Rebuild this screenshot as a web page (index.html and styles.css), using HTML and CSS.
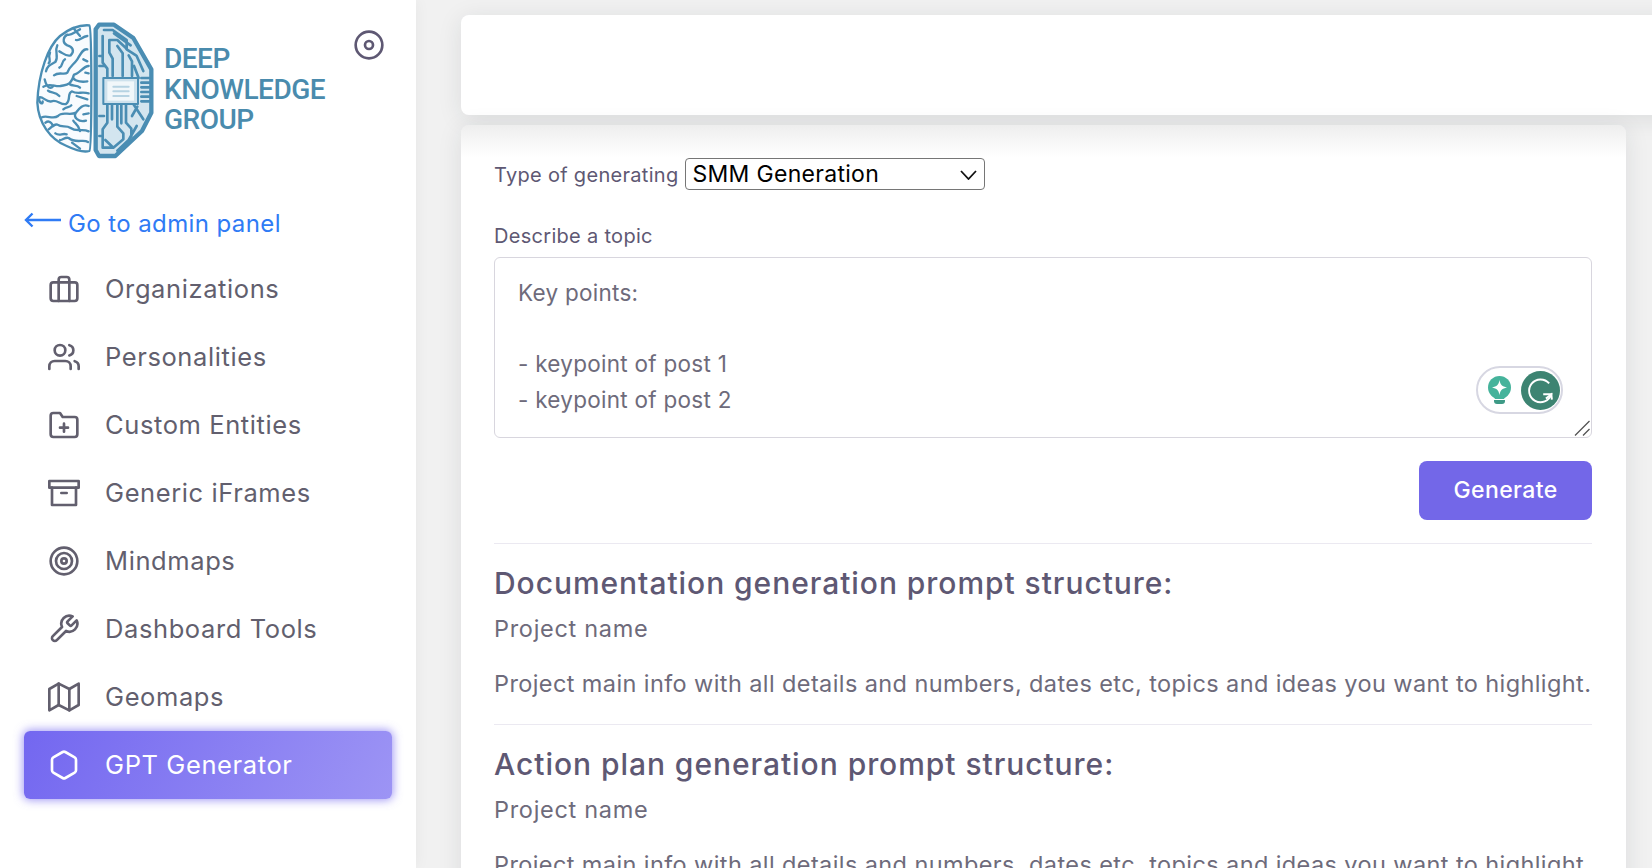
FILE: index.html
```html
<!DOCTYPE html>
<html lang="en">
<head>
<meta charset="utf-8">
<title>GPT Generator</title>
<link rel="stylesheet" href="styles.css">
</head>
<body>
<div class="app">
  <aside class="sidebar">
    <div class="brand">
      <svg class="brain" viewBox="0 0 390 450" fill="none" stroke="#4a8db3" stroke-linecap="round" stroke-linejoin="round">
        <path d="M178 28C150 26 120 36 90 60C55 90 25 170 22 260C25 320 60 370 110 390C135 402 160 410 178 405C186 400 186 35 178 28Z" fill="#f8fbfe" stroke-width="7"/>
        <g stroke-width="7">
          <path d="M150 40C130 50 125 60 112 56C100 62 95 80 112 88C128 92 135 105 122 118C108 122 100 112 88 106"/>
          <path d="M172 60C155 62 150 76 138 72M172 100C158 96 150 118 142 130C130 148 118 150 112 170C104 178 86 166 72 178"/>
          <path d="M82 88C72 108 88 120 76 138C62 146 52 148 48 166"/>
          <path d="M176 150C160 150 150 172 132 176C120 192 150 200 172 196M132 176C122 210 108 206 92 210C76 214 62 200 40 212"/>
          <path d="M176 232C155 226 140 236 126 226C110 232 124 254 108 264C92 268 80 248 64 256C50 260 38 240 28 244C24 262 40 268 38 256"/>
          <path d="M176 270C158 262 146 280 138 290C128 304 146 320 168 314M138 290C118 300 96 284 84 300C70 312 50 296 36 304"/>
          <path d="M176 346C156 336 140 350 122 336C108 326 96 336 82 326C72 322 62 336 56 340"/>
          <path d="M174 378C160 368 138 384 116 366C106 362 96 374 90 372"/>
          <path d="M60 110C52 128 66 130 56 142M88 240C76 226 62 232 54 224M150 345C146 325 134 322 130 314"/>
          <path d="M105 130C92 138 100 150 88 155M160 130L172 136M70 210C62 220 50 216 44 190M150 215C140 205 128 212 118 204"/>
          <path d="M70 330C60 312 52 316 46 320M110 355C96 350 90 362 76 352M160 295L176 292M100 280C110 270 118 276 124 268"/>
          <path d="M140 240L172 250M166 170L176 172M150 60L130 36M126 380L150 398"/>
        </g>
        <path d="M207 26H252L310 66L364 160V290L336 345L256 420H207L197 402V40Z" fill="#d3e5ef" stroke-width="13"/>
        <g stroke-width="8">
          <path d="M222 42H248L290 72V98L262 72H238V110L248 128V180"/>
          <path d="M218 60V140L232 158V186M262 90L278 112V180M296 118L306 136V180"/>
          <path d="M320 120L340 165M312 150L326 186M252 52L302 88M290 100L318 118"/>
          <path d="M334 186H358M334 200H358M334 214H358M334 228H358M334 242H358M334 256H358"/>
          <path d="M232 264V320L218 340V395H250L280 370V352L262 332V264M250 395L226 372"/>
          <path d="M288 264V320L304 338V362M310 264L340 310M322 272L306 300M246 268V310M274 268V322M320 330L296 372L262 404"/>
          <path d="M208 150H224M208 300H222M208 120H216M208 360H214"/>
        </g>
        <rect x="220" y="186" width="104" height="78" fill="#cfe2ed" stroke-width="6"/>
        <rect x="232" y="196" width="80" height="58" fill="#f1f7fa" stroke="none"/>
        <path d="M250 212H296M250 226H296M250 240H296" stroke="#b6d3e2" stroke-width="6"/>
      </svg>
      <div class="wordmark"><span>DEEP</span><span>KNOWLEDGE</span><span>GROUP</span></div>
      <svg class="toggle" viewBox="0 0 24 24" fill="none" stroke="currentColor" stroke-width="2"><circle cx="12" cy="12" r="10"/><circle cx="12" cy="12" r="3"/></svg>
    </div>
    <a class="back" href="#">
      <svg class="back-arrow" viewBox="0 0 37 16" fill="none" stroke="currentColor" stroke-width="2.4"><path d="M37 8H2"/><path d="M8.500 1.500L2 8L8.500 14.500"/></svg>
      <span>Go to admin panel</span>
    </a>
    <nav class="nav">
      <a class="item" href="#"><svg class="ico" viewBox="0 0 24 24"><rect x="2" y="7" width="20" height="14" rx="2"/><path d="M16 21V5a2 2 0 0 0-2-2h-4a2 2 0 0 0-2 2v16"/></svg><span class="label">Organizations</span></a>
      <a class="item" href="#"><svg class="ico" viewBox="0 0 24 24"><path d="M17 21v-2a4 4 0 0 0-4-4H5a4 4 0 0 0-4 4v2"/><circle cx="9" cy="7" r="4"/><path d="M23 21v-2a4 4 0 0 0-3-3.87"/><path d="M16 3.13a4 4 0 0 1 0 7.75"/></svg><span class="label">Personalities</span></a>
      <a class="item" href="#"><svg class="ico" viewBox="0 0 24 24"><path d="M22 19a2 2 0 0 1-2 2H4a2 2 0 0 1-2-2V5a2 2 0 0 1 2-2h5l2 3h9a2 2 0 0 1 2 2z"/><path d="M12 11v6M9 14h6"/></svg><span class="label">Custom Entities</span></a>
      <a class="item" href="#"><svg class="ico" viewBox="0 0 24 24"><path d="M21 8v13H3V8"/><rect x="1" y="3" width="22" height="5"/><path d="M10 12h4"/></svg><span class="label">Generic iFrames</span></a>
      <a class="item" href="#"><svg class="ico" viewBox="0 0 24 24"><circle cx="12" cy="12" r="10"/><circle cx="12" cy="12" r="6"/><circle cx="12" cy="12" r="2"/></svg><span class="label">Mindmaps</span></a>
      <a class="item" href="#"><svg class="ico" viewBox="0 0 24 24"><path d="M14.7 6.3a1 1 0 0 0 0 1.4l1.6 1.6a1 1 0 0 0 1.4 0l3.77-3.77a6 6 0 0 1-7.94 7.94l-6.91 6.91a2.12 2.12 0 0 1-3-3l6.91-6.91a6 6 0 0 1 7.94-7.94l-3.76 3.76z"/></svg><span class="label">Dashboard Tools</span></a>
      <a class="item" href="#"><svg class="ico" viewBox="0 0 24 24"><path d="M1 6v16l7-4 8 4 7-4V2l-7 4-8-4z"/><path d="M8 2v16M16 6v16"/></svg><span class="label">Geomaps</span></a>
      <a class="item active" href="#"><svg class="ico" viewBox="0 0 24 24"><path d="M21 16V8a2 2 0 0 0-1-1.73l-7-4a2 2 0 0 0-2 0l-7 4A2 2 0 0 0 3 8v8a2 2 0 0 0 1 1.73l7 4a2 2 0 0 0 2 0l7-4A2 2 0 0 0 21 16z"/></svg><span class="label">GPT Generator</span></a>
    </nav>
  </aside>
  <main class="content">
    <div class="card topbar"></div>
    <section class="card panel">
      <div class="type-row">
        <label class="type-label" for="type">Type of generating</label>
        <div class="select-wrap">
          <select class="type-select" id="type"><option>SMM Generation</option></select>
          <svg class="chevron" viewBox="0 0 17 10" fill="none" stroke="#111" stroke-width="1.800"><path d="M1 1L8.500 9L16 1"/></svg>
        </div>
      </div>
      <label class="topic-label" for="topic">Describe a topic</label>
      <div class="field">
        <textarea class="topic" id="topic">Key points:

- keypoint of post 1
- keypoint of post 2</textarea>
        <svg class="grip" viewBox="0 0 16 16" fill="none" stroke="#555" stroke-width="1.300"><path d="M1 15.500L15.500 1M9 15.500L15.500 9"/></svg>
        <div class="grammarly">
          <svg class="g-bulb" viewBox="0 0 23 28"><circle cx="11.500" cy="11.500" r="11.500" fill="#45b39b"/><path d="M5 19h13l-2 4H7z" fill="#45b39b"/><path d="M6 24h11v1a3 3 0 0 1-3 3H9a3 3 0 0 1-3-3z" fill="#3e9a86"/><path d="M11.500 4C12.500 9 14 10.500 19 11.500C14 12.500 12.500 14 11.500 19C10.500 14 9 12.500 4 11.500C9 10.500 10.500 9 11.500 4Z" fill="#fff"/></svg>
          <svg class="g-mark" viewBox="0 0 36 36"><circle cx="18" cy="18" r="18" fill="#3d8472"/><path d="M26 11.500A10.500 10.500 0 1 0 28 21.500H20.500" fill="none" stroke="#fff" stroke-width="1.800"/><path d="M23 25.500L28 21.500L28.500 26.500" fill="none" stroke="#fff" stroke-width="1.800"/></svg>
        </div>
      </div>
      <div class="actions"><button class="generate" type="button">Generate</button></div>
      <hr class="rule">
      <h2 class="title">Documentation generation prompt structure:</h2>
      <p class="line name">Project name</p>
      <p class="line info">Project main info with all details and numbers, dates etc, topics and ideas you want to highlight.</p>
      <hr class="rule">
      <h2 class="title">Action plan generation prompt structure:</h2>
      <p class="line name">Project name</p>
      <p class="line info">Project main info with all details and numbers, dates etc, topics and ideas you want to highlight.</p>
    </section>
  </main>
</div>
</body>
</html>
```
FILE: styles.css
```css
* { box-sizing: border-box; }
html, body { margin: 0; height: 100%; overflow: hidden; }
body { background: #f1f1f1; font-family: Inter, "Noto Sans", sans-serif; color: #6e6b7b; }
a { text-decoration: none; color: inherit; }

.app { display: flex; height: 868px; overflow: hidden; }

.sidebar { flex: 0 0 416px; background: #fff; padding: 0 24px; box-shadow: 0 0 15px rgba(34, 41, 47, .05); position: relative; z-index: 2; }
.brand { display: flex; align-items: flex-start; height: 205px; padding: 16px 0 0 6px; }
.brain { width: 130px; height: 150px; flex: none; filter: blur(.4px); }
.wordmark { display: flex; flex-direction: column; margin: 28px 0 0 4px; font-family: Roboto, sans-serif; font-weight: 500; font-size: 28px; line-height: 30.5px; letter-spacing: -.5px; color: #4a8bad; }
.toggle { width: 32px; height: 32px; margin: 12.5px 0 0 auto; position: relative; right: 7.5px; color: #5e5873; }

.back { display: flex; align-items: center; height: 36px; color: #2f7bf5; font-size: 24px; margin-bottom: 14px; letter-spacing: .4px; }
.back-arrow { width: 37px; height: 16px; margin-right: 7px; position: relative; top: -3px; }

.nav { display: flex; flex-direction: column; }
.item { display: flex; align-items: center; gap: 25px; height: 68px; padding-left: 24px; border-radius: 6px; font-size: 25.5px; letter-spacing: .6px; color: #625f6e; }
.label { margin-bottom: 1px; }
.ico { width: 32px; height: 32px; flex: none; fill: none; stroke: currentColor; stroke-width: 2; stroke-linecap: round; stroke-linejoin: round; }
.item.active { color: #fff; background: linear-gradient(118deg, #7367f0, rgba(115, 103, 240, .7)); box-shadow: 0 0 10px 1px rgba(115, 103, 240, .7); }

.content { flex: 1; min-width: 0; padding: 15px 26px 0 45px; display: flex; flex-direction: column; gap: 10px; }
.card { background: #fff; border-radius: 8px; box-shadow: 0 4px 24px rgba(34, 41, 47, .1); }
.topbar { height: 100px; flex: none; margin-right: -60px; }
.panel { flex: none; padding: 33px 34px 0 33px; height: 900px; background: linear-gradient(#eeeeee, #fff 32px); }

.type-row { display: flex; align-items: center; gap: 7px; height: 32px; }
.type-label { font-size: 20px; letter-spacing: .3px; color: #5e5873; position: relative; top: 1px; }
.select-wrap { position: relative; width: 300px; height: 32px; }
.type-select { display: block; appearance: none; width: 100%; height: 100%; font: 23px Inter, sans-serif; letter-spacing: .3px; color: #000; background: #fff; border: 1px solid #767676; border-radius: 4px; padding: 0 6px; }
.chevron { position: absolute; right: 8px; top: 12px; width: 17px; height: 10px; pointer-events: none; }

.topic-label { display: block; margin: 34px 0 9px; font-size: 20px; line-height: 24px; letter-spacing: .3px; color: #5e5873; }
.field { position: relative; }
.topic { display: block; width: 100%; height: 181px; padding: 17px 23px; border: 1px solid #d8d6de; border-radius: 6px; font: 22.5px/35.7px Inter, sans-serif; letter-spacing: .27px; color: #6e6b7b; background: #fff; outline: none; resize: none; }
.grip { position: absolute; right: 2px; bottom: 2px; width: 16px; height: 16px; pointer-events: none; }

.grammarly { position: absolute; right: 29px; top: 109px; width: 87px; height: 48px; display: flex; align-items: center; padding-left: 10px; gap: 10px; background: #fff; border: 2px solid #d7d7e2; border-radius: 24px; }
.g-bulb { width: 23px; height: 28px; flex: none; }
.g-mark { width: 39px; height: 39px; flex: none; }

.actions { display: flex; justify-content: flex-end; margin-top: 23px; }
.generate { width: 173px; height: 59px; border: 0; border-radius: 8px; background: #7367e8; color: #fff; font: 500 23px Inter, sans-serif; letter-spacing: .4px; padding: 0 0 2px; }

.rule { margin: 23px 0 0; border: 0; border-top: 1px solid #ebe9f1; }
.rule ~ .rule { margin-top: 24px; }
.title { margin: 19px 0 0; font-size: 30px; line-height: 40px; font-weight: 500; color: #5e5873; letter-spacing: .95px; }
.line { margin: 0; font-size: 23.5px; line-height: 32px; letter-spacing: .4px; white-space: nowrap; }
.name { margin-top: 10px; letter-spacing: .7px; }
.info { margin-top: 23px; }
```
